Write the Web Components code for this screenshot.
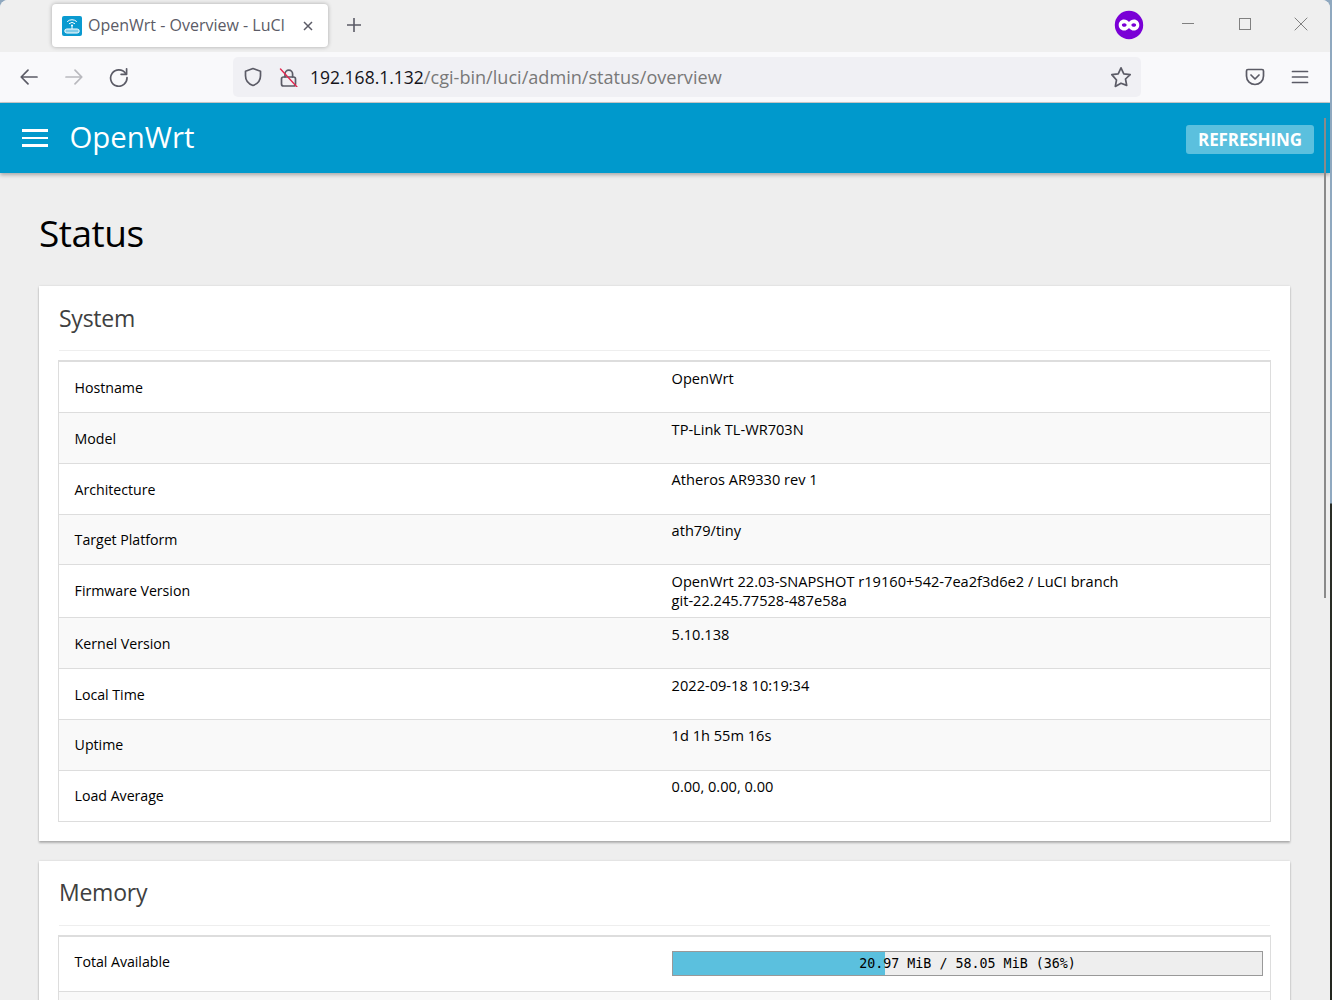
<!DOCTYPE html>
<html lang="en"><head><meta charset="utf-8"><title>OpenWrt - Overview - LuCI</title>
<style>
html,body{margin:0;height:1000px;overflow:hidden;background:linear-gradient(#8fa8bf 0,#8fa8bf 503px,#2a2d26 504px,#23261f 100%);}
body{font-family:"Open Sans","Noto Sans",sans-serif;}
</style></head><body>
<browser-window>
  <browser-tabbar>
    <browser-tab>OpenWrt - Overview - LuCI</browser-tab>
  </browser-tabbar>
  <browser-toolbar><b slot="host">192.168.1.132</b><span slot="path">/cgi-bin/luci/admin/status/overview</span></browser-toolbar>
  <luci-header>
    <span slot="brand">OpenWrt</span>
    <span slot="badge">REFRESHING</span>
  </luci-header>
  <luci-page>
    <span slot="title">Status</span>
    <status-card>
      <span slot="title">System</span>
      <kv-row><span slot="label">Hostname</span>OpenWrt</kv-row>
      <kv-row><span slot="label">Model</span>TP-Link TL-WR703N</kv-row>
      <kv-row><span slot="label">Architecture</span>Atheros AR9330 rev 1</kv-row>
      <kv-row><span slot="label">Target Platform</span>ath79/tiny</kv-row>
      <kv-row><span slot="label">Firmware Version</span>OpenWrt 22.03-SNAPSHOT r19160+542-7ea2f3d6e2 / LuCI branch<br>git-22.245.77528-487e58a</kv-row>
      <kv-row><span slot="label">Kernel Version</span>5.10.138</kv-row>
      <kv-row><span slot="label">Local Time</span>2022-09-18 10:19:34</kv-row>
      <kv-row><span slot="label">Uptime</span>1d 1h 55m 16s</kv-row>
      <kv-row><span slot="label">Load Average</span>0.00, 0.00, 0.00</kv-row>
    </status-card>
    <status-card>
      <span slot="title">Memory</span>
      <kv-row bar><span slot="label">Total Available</span><usage-bar pct="36">20.97 MiB / 58.05 MiB (36%)</usage-bar></kv-row>
      <kv-row></kv-row>
    </status-card>
  </luci-page>
</browser-window>
<script>
function def(name, css, html){
  customElements.define(name, class extends HTMLElement{
    constructor(){super();this.attachShadow({mode:'open'}).innerHTML='<style>'+css+'</style>'+html;}
  });
}
const ic='fill="none" stroke="#5b5b66" stroke-width="1.7" stroke-linecap="round" stroke-linejoin="round"';

def('browser-window',`
:host{display:flex;flex-direction:column;width:1330px;height:1000px;background:#eee;border-radius:8px 8px 0 0;overflow:hidden;position:relative}
.scroll{position:absolute;left:1324px;top:118px;height:480px;width:2px;background:#8a8a8a;z-index:2}
`,`<slot></slot><div class="scroll"></div>`);

def('browser-tabbar',`
:host{display:flex;align-items:flex-start;height:52px;background:#efefef;box-sizing:border-box;padding:4px 0 0 52px;flex:none}
.plus{margin:13px 0 0 18px;width:16px;height:16px;display:block}
.acct{margin:6px 0 0 auto;display:block}
.ctl{display:block}
`,`<slot></slot>
<svg class="plus" viewBox="0 0 16 16" fill="none" stroke="#5b5b66" stroke-width="1.6"><path d="M8 1v14M1 8h14"/></svg>
<svg class="acct" width="30" height="30" viewBox="0 0 30 30" style="margin-right:37px"><circle cx="15" cy="15" r="14.200" fill="#7a00d6"/><path fill="#fff" fill-rule="evenodd" d="M10 9.500c2.200 0 3.800 1.200 5 2.600 1.200-1.400 2.800-2.600 5-2.600 3 0 5.300 2.400 5.300 5.500s-2.300 5.500-5.300 5.500c-2.200 0-3.800-1.200-5-2.600-1.200 1.400-2.800 2.600-5 2.600-3 0-5.300-2.400-5.300-5.500S7 9.500 10 9.500zM10.200 13.200c-1.300 0-2.300.8-2.300 1.800s1 1.800 2.300 1.800 2.400-.8 2.400-1.800-1.100-1.800-2.400-1.800zm9.600 0c-1.300 0-2.400.8-2.400 1.800s1.100 1.800 2.400 1.800 2.300-.8 2.300-1.800-1-1.800-2.300-1.800z"/></svg>
<svg class="ctl" width="14" height="14" viewBox="0 0 14 14" style="margin:13px 43px 0 0" fill="none" stroke="#808080" stroke-width="1"><path d="M1 6.500h12"/></svg>
<svg class="ctl" width="14" height="14" viewBox="0 0 14 14" style="margin:13px 42px 0 0" fill="none" stroke="#808080" stroke-width="1"><rect x="1.500" y="1.500" width="11" height="11"/></svg>
<svg class="ctl" width="14" height="14" viewBox="0 0 14 14" style="margin:13px 22px 0 0" fill="none" stroke="#808080" stroke-width="1"><path d="M.7.700l12.600 12.600M13.300.7L.7 13.300"/></svg>`);

def('browser-tab',`
:host{display:flex;align-items:center;box-sizing:border-box;width:276px;height:43px;background:#fff;border-radius:4px;box-shadow:0 0 4px rgba(0,0,0,.3);padding-left:10px;color:#5b5b66;font-size:16px;white-space:nowrap}
.t{margin-left:6px;flex:1;padding-bottom:2px}
svg.x{margin-right:14px;display:block}
`,`<svg width="20" height="20" viewBox="0 0 20 20" style="display:block"><rect width="20" height="20" rx="2" fill="#0a9ad0"/>
<g fill="none" stroke="#fff" stroke-width="1" stroke-linecap="round"><path d="M5.500 5.400a6.500 6.500 0 0 1 9 0"/><path d="M7.300 7.500a3.900 3.900 0 0 1 5.400 0"/><path d="M10 9.500v3.500"/></g><circle cx="10" cy="9.600" r="1" fill="#fff"/><rect x="2.800" y="13" width="14.400" height="4" rx="2" fill="#7fcbe8" stroke="#fff" stroke-width="1"/></svg>
<span class="t"><slot></slot></span>
<svg class="x" width="12" height="12" viewBox="0 0 12 12" fill="none" stroke="#5b5b66" stroke-width="1.500"><path d="M2 2l8 8M10 2l-8 8"/></svg>`);

def('browser-toolbar',`
:host{display:flex;align-items:center;box-sizing:border-box;height:51px;background:#f9f9fb;border-bottom:1px solid #ccc;padding:0 0 1px 19px;flex:none}
svg{display:block;flex:none}
.url{display:flex;align-items:center;box-sizing:border-box;width:908px;height:40px;margin-left:104px;background:#f0f0f4;border-radius:5px;padding:0 9px 0 10px}
.text{margin-left:11px;font-size:18.100px;white-space:nowrap;color:#787878;flex:1}
::slotted(b){font-weight:400;color:#15141a;font-size:17.500px}
`,`<svg width="20" height="20" viewBox="0 0 20 20" ${ic}><path d="M18 10H2.500M9 3.200 2.200 10 9 16.800"/></svg>
<svg width="20" height="20" viewBox="0 0 20 20" fill="none" stroke="#b9b9be" stroke-width="1.700" stroke-linecap="round" stroke-linejoin="round" style="margin-left:25px"><path d="M2 10h15.500M11 3.200 17.800 10 11 16.800"/></svg>
<svg width="20" height="20" viewBox="0 0 20 20" ${ic} style="margin-left:25px"><path d="M16.600 6.400A8.200 8.200 0 1 0 18 10.500"/><path d="M17.600 1.800v5.500h-5.500" /></svg>
<div class="url">
<svg width="20" height="20" viewBox="0 0 20 20" ${ic}><path d="M10 1.500l7.500 2.700v4.600c0 5-3.200 8.200-7.500 9.700-4.300-1.500-7.500-4.700-7.500-9.700V4.200z"/></svg>
<svg width="20" height="20" viewBox="0 0 20 20" style="margin-left:16px"><g ${ic}><rect x="2.500" y="10" width="14" height="9" rx="2"/><path d="M6 10V7a3.800 3.800 0 0 1 7.600 0v3"/></g><path d="M1.500 2 18 20" stroke="#e22850" stroke-width="1.400" stroke-linecap="round"/></svg>
<span class="text"><slot name="host"></slot><slot name="path"></slot></span>
<svg width="22" height="22" viewBox="0 0 22 22" ${ic}><path d="M11 1.800l2.800 6 6.400.8-4.700 4.400 1.200 6.400L11 17.200l-5.700 3.200 1.200-6.400L1.800 8.600l6.400-.8z"/></svg>
</div>
<svg width="20" height="20" viewBox="0 0 20 20" ${ic} style="margin-left:104px"><path d="M3 2.500h14c1 0 1.500.6 1.500 1.500v5c0 5-4 8.500-8.500 8.500S1.500 14 1.500 9V4c0-.9.5-1.500 1.500-1.500z"/><path d="M6 8l4 4 4-4"/></svg>
<svg width="18" height="18" viewBox="0 0 18 18" ${ic} style="margin-left:26px"><path d="M1.500 3.500h15M1.500 9h15M1.500 14.500h15"/></svg>`);

def('luci-header',`
:host{display:flex;align-items:center;box-sizing:border-box;height:70px;background:#0099cc;padding:0 16px 0 22px;color:#fff;flex:none;position:relative;z-index:1;box-shadow:0 2px 4px rgba(0,0,0,.3)}
.burger{display:flex;flex-direction:column;gap:5px;width:26px}
.burger i{display:block;height:2.500px;background:#fff}
.brand{margin:0 0 3px 21.500px;font-size:29.400px;flex:1}
.badge{box-sizing:border-box;height:29px;width:128px;background:#5bc0de;border-radius:3px;font-weight:700;font-size:17px;text-align:center;line-height:29px;margin-top:3px;letter-spacing:-.1px}
`,`<div class="burger"><i></i><i></i><i></i></div><span class="brand"><slot name="brand"></slot></span><span class="badge"><slot name="badge"></slot></span>`);

def('luci-page',`
:host{display:block;padding:0 40px 0 39px;background:#eee;flex:1}
h2{margin:0;font-weight:400;font-size:37px;line-height:50px;padding:35px 0 28px 0;color:#000;letter-spacing:-.5px;height:50px}
`,`<h2><slot name="title"></slot></h2><slot></slot>`);

def('status-card',`
:host{display:block;background:#fff;padding:15.500px 19px 19px 19px;margin-bottom:20px;box-shadow:0 2px 2px rgba(0,0,0,.25),0 0 2px rgba(0,0,0,.12)}
h3{margin:0 1px 9.450px 1px;font-weight:400;font-size:23px;line-height:32px;color:#404040;padding-bottom:16.500px;border-bottom:1px solid #eee;letter-spacing:-.25px}
.t{border:1px solid #ddd;padding-bottom:.6px}
`,`<h3><slot name="title"></slot></h3><div class="t"><slot></slot></div>`);

def('kv-row',`
:host{display:grid;grid-template-columns:597px 1fr;font-size:14.600px;line-height:19px;color:#000;border-top:1px solid #ddd;background:#fff;box-sizing:border-box}
:host(:nth-child(odd)){background:#f9f9f9}
.l{padding:15.600px 16px 15.150px 15.600px;font-size:14.200px;letter-spacing:-.03px}
.v{padding:6.500px 16px 7.500px 15.600px}
:host([bar]) .l{padding:15px 16px 20px 15.600px}
:host([bar]) .v{padding:14px 7px 15px 16px}
`,`<div class="l"><slot name="label"></slot></div><div class="v"><slot></slot></div>`);

customElements.define('usage-bar', class extends HTMLElement{
  constructor(){
    super();
    const pct=this.getAttribute('pct')||0;
    this.attachShadow({mode:'open'}).innerHTML=`<style>
:host{display:block;position:relative;box-sizing:border-box;height:25px;border:1px solid #999;background:#eee;font-family:"DejaVu Sans Mono",monospace;font-size:13.330px;line-height:23px;text-align:center;color:#000}
.f{position:absolute;left:0;top:0;bottom:0;width:${pct}%;background:#5bc0de}
.x{position:relative}
</style><div class="f"></div><span class="x"><slot></slot></span>`;
  }
});
</script>
</body></html>
